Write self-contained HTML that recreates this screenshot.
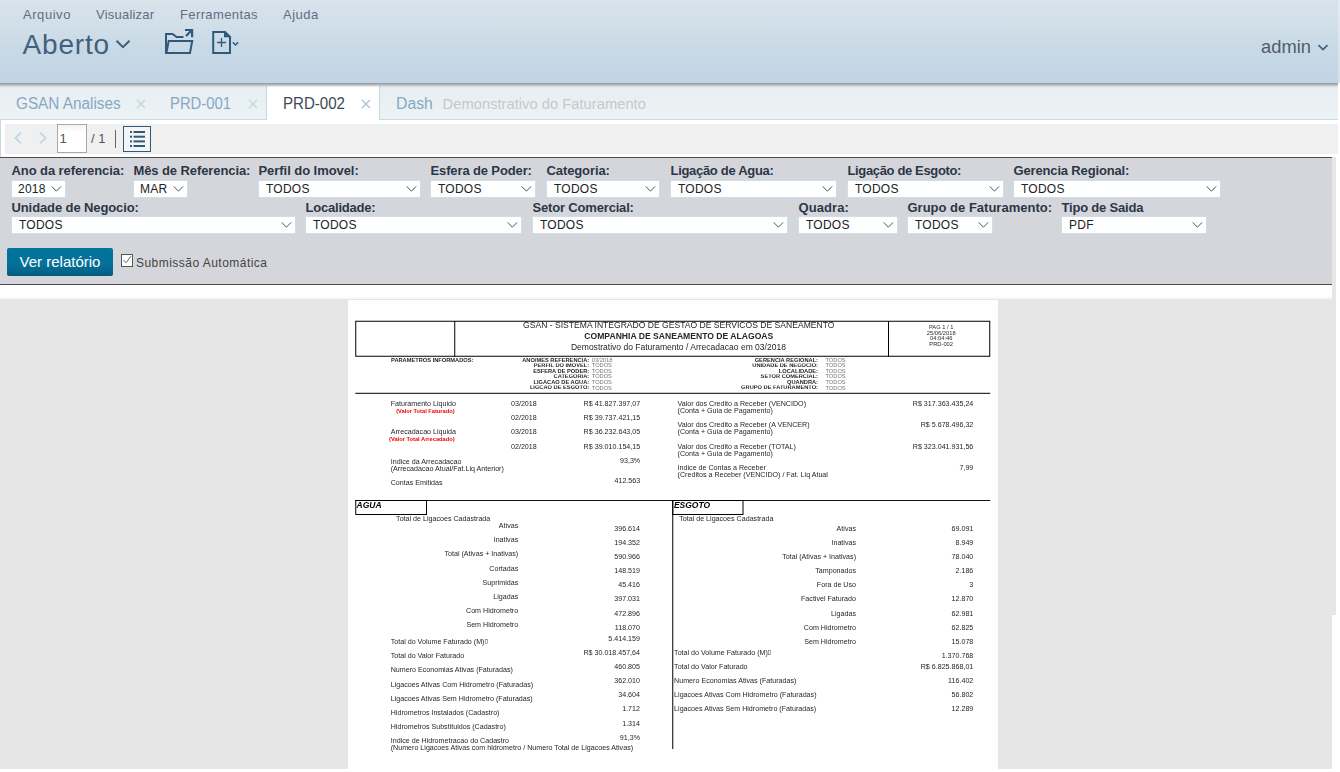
<!DOCTYPE html>
<html lang="pt-BR">
<head>
<meta charset="utf-8">
<title>PRD-002</title>
<style>
*{box-sizing:border-box;margin:0;padding:0}
html,body{width:1340px;height:772px;overflow:hidden;background:#fff}
body{font-family:"Liberation Sans",Arial,sans-serif;position:relative;color:#333}
.abs{position:absolute}
#hdr{left:0;top:0;width:1338px;height:83px;background:linear-gradient(#d8e3ec 0%,#d1dfe9 30%,#c9dae6 55%,#c4d6e5 80%,#c3d5e5 100%)}
#hdrR{left:1338px;top:0;width:2px;height:83px;background:linear-gradient(#e3ebf2,#d3e0ec)}
.menu{top:7px;font-size:13px;line-height:16px;color:#5f6f80;letter-spacing:.27px;white-space:nowrap}
#aberto{left:22.6px;top:27.5px;font-size:28px;line-height:34px;color:#42607d;letter-spacing:.8px;white-space:nowrap}
#admin{left:1261px;top:36px;font-size:19px;line-height:22px;color:#525c68;white-space:nowrap;transform:scaleX(.965);transform-origin:0 0}
#tabs{left:0;top:83px;width:1338px;height:37px;background:linear-gradient(#e6eef1,#edf3f5);border-bottom:1px solid #c6dae7}
#tabshadow{left:0;top:83px;width:1338px;height:5px;background:linear-gradient(rgba(100,105,110,.66) 0%,rgba(100,105,110,.52) 20%,rgba(100,105,110,.36) 40%,rgba(100,105,110,.18) 60%,rgba(100,105,110,.06) 80%,rgba(100,105,110,0) 100%)}
.tab{top:94.2px;font-size:16px;line-height:20px;color:#86a8c6;white-space:nowrap;transform-origin:0 0}
.tx{top:93px;font-size:19px;line-height:20px;color:#c3d3df;font-weight:400}
#act{left:266px;top:86px;width:114px;height:34px;background:#fff;border-left:1px solid #c3d8e8;border-right:1px solid #c3d8e8}
#tool{left:5px;top:124px;width:1333px;height:30px;background:#f0f0f0}
#pg{left:57px;top:124px;width:30px;height:29px;border:1px solid #a9a9a9;background:linear-gradient(#f3f3f3 0,#fff 8px);font-size:13px;line-height:27px;padding-left:1.5px;color:#555}
#pgof{left:91px;top:130px;font-size:13px;line-height:18px;color:#555;white-space:nowrap}
#sep{left:115px;top:130px;width:1px;height:18px;background:#666}
#lst{left:123px;top:126px;width:28px;height:26px;border:1.5px solid #2e5a7c;background:#f4f4f4}
#pline{left:0;top:157px;width:1332px;height:1px;background:#4d4d4f}
#panel{left:0;top:158px;width:1332px;height:126px;background:#d5d6db}
#pline2{left:0;top:284px;width:1332px;height:1px;background:#4d4d4f}
#rstrip{left:1332px;top:157px;width:4px;height:458px;background:#e6e6e6}
#lborder{left:0;top:119px;width:1px;height:38px;background:#c5d9e8}
#wfade{left:0;top:296px;width:1332px;height:3px;background:linear-gradient(#fff,#f5f5f5)}
#pgtop{left:348px;top:299px;width:650px;height:1px;background:#e6e6e6}
#grey{left:0;top:299px;width:1332px;height:470px;background:#e6e6e6}
.lb{font-size:13px;font-weight:700;line-height:16px;color:#2c3646;white-space:nowrap}
.sel{height:18px;background:#fff;border:1px solid #cbdeeb;font-size:12px;line-height:14px;color:#222;padding:1px 0 0 7px;white-space:nowrap;letter-spacing:.25px}
.sel svg{position:absolute;right:3px;top:4px}
#btn{left:7px;top:248px;width:106px;height:28px;background:linear-gradient(#03749c 0%,#03719a 55%,#05678c 80%,#06597b 100%);border-radius:2px;color:#fff;font-size:15px;line-height:28px;text-align:center;white-space:nowrap}
#cb{left:121px;top:254px;width:12px;height:12.5px;border:1px solid #555;background:#fff}
#cbl{left:136px;top:256px;font-size:12px;line-height:15px;color:#444;letter-spacing:.47px;white-space:nowrap}
#page{left:348px;top:299px;width:650px;height:470px;background:#fff;overflow:hidden;color:#262626}
#page .t{position:absolute;white-space:nowrap}
#page .ln{position:absolute}
#page .bx{position:absolute;border:1px solid #000}
#page .clip{position:absolute;overflow:hidden}
.tofu{display:inline-block;width:.36em;height:.65em;border:.08em solid #555;margin-left:.06em}
</style>
</head>
<body>
<div id="hdr" class="abs"></div><div id="hdrR" class="abs"></div>
<div class="abs menu" style="left:23px;letter-spacing:.55px">Arquivo</div>
<div class="abs menu" style="left:96px;letter-spacing:.22px">Visualizar</div>
<div class="abs menu" style="left:180px;letter-spacing:.38px">Ferramentas</div>
<div class="abs menu" style="left:283px;letter-spacing:.5px">Ajuda</div>
<div id="aberto" class="abs">Aberto</div>
<svg class="abs" style="left:115px;top:38px" width="16" height="12" viewBox="0 0 16 12"><path d="M1.5 2.7 L8 9.2 L14.5 2.7" fill="none" stroke="#3b607f" stroke-width="2"/></svg>
<!-- folder icon -->
<svg class="abs" style="left:160px;top:26px" width="38" height="32" viewBox="0 0 38 32"><g fill="none" stroke="#2f5a7b" stroke-width="2" stroke-linejoin="miter"><path d="M6 28 V8 H12.6 L16.6 11 H23.5"/><path d="M8.7 15 L6.4 27 H30 L32.2 15 Z"/><path d="M26 10 L32 4" stroke-width="2.3"/><path d="M25 4 H32.1 V11.3" stroke-width="2.2"/></g></svg>
<!-- doc icon -->
<svg class="abs" style="left:208px;top:28px" width="34" height="30" viewBox="0 0 34 30"><g fill="none" stroke="#2f5a7b"><path d="M5.2 4 H17 L22 9 V25 H5.2 Z" stroke-width="2"/><path d="M16.8 4.5 V8.4 H21.5 Z" stroke-width="1.6" fill="#2f5a7b"/><path d="M13.5 10 V19 M9 14.5 H18" stroke-width="1.3"/><path d="M24.8 14.3 L27.5 17 L30.2 14.3" stroke-width="1.5"/></g></svg>
<div id="admin" class="abs">admin</div>
<svg class="abs" style="left:1316px;top:42px" width="14" height="10" viewBox="0 0 14 10"><path d="M2.5 3.1 L7 7.6 L11.5 3.1" fill="none" stroke="#3b607f" stroke-width="1.6"/></svg>

<div id="tabs" class="abs"></div>
<div id="act" class="abs"></div>
<div id="tabshadow" class="abs"></div>
<div class="abs tab" style="left:15.7px;transform:scaleX(.957)">GSAN Analises</div><svg class="abs" style="left:136px;top:99px" width="10" height="10" viewBox="0 0 10 10"><path d="M1 1 L9 9 M9 1 L1 9" fill="none" stroke="#c0d2df" stroke-width="1.2"/></svg>
<div class="abs tab" style="left:169.9px;transform:scaleX(.927)">PRD-001</div><svg class="abs" style="left:248px;top:99px" width="10" height="10" viewBox="0 0 10 10"><path d="M1 1 L9 9 M9 1 L1 9" fill="none" stroke="#c0d2df" stroke-width="1.2"/></svg>
<div class="abs tab" style="left:283.2px;transform:scaleX(.942);color:#3d4856">PRD-002</div><svg class="abs" style="left:361px;top:99px" width="10" height="10" viewBox="0 0 10 10"><path d="M1 1 L9 9 M9 1 L1 9" fill="none" stroke="#aac0d2" stroke-width="1.2"/></svg>
<div class="abs tab" style="left:395.7px;transform:scaleX(.985)">Dash</div>
<div class="abs tab" style="left:442.6px;top:94.2px;font-size:14.75px;color:#c7c8cc">Demonstrativo do Faturamento</div>

<div id="tool" class="abs"></div>
<svg class="abs" style="left:12px;top:130px" width="38" height="16" viewBox="0 0 38 16"><path d="M9 2.5 L3.5 8 L9 13.5 M28 2.5 L33.5 8 L28 13.5" fill="none" stroke="#bdd3e6" stroke-width="1.6"/></svg>
<div id="pg" class="abs">1</div>
<div id="pgof" class="abs">/ 1</div>
<div id="sep" class="abs"></div>
<div id="lst" class="abs"></div>
<svg class="abs" style="left:123px;top:126px" width="28" height="26" viewBox="0 0 28 26"><g fill="#2e5a7c"><rect x="7" y="5" width="2" height="2"/><rect x="10.5" y="5" width="11.5" height="2"/><rect x="7" y="9.7" width="2" height="2"/><rect x="10.5" y="9.7" width="11.5" height="2"/><rect x="7" y="14.4" width="2" height="2"/><rect x="10.5" y="14.4" width="11.5" height="2"/><rect x="7" y="19" width="2" height="2"/><rect x="10.5" y="19" width="11.5" height="2"/></g></svg>

<div id="wfade" class="abs"></div><div id="grey" class="abs"></div>
<div id="rstrip" class="abs"></div><div id="lborder" class="abs"></div>
<div id="pline" class="abs"></div>
<div id="panel" class="abs"></div>
<div id="pline2" class="abs"></div>
<div class="abs lb" style="left:11.5px;top:162.8px;letter-spacing:-0.081px">Ano da referencia:</div>
<div class="abs sel" style="left:11px;top:180px;width:55px;padding-left:6px">2018<svg width="12" height="8" viewBox="0 0 12 8"><path d="M1.7 1.4 L6.4 6.2 L11.1 1.4" fill="none" stroke="#4a4a4a" stroke-width=".95"/></svg></div>
<div class="abs lb" style="left:133.5px;top:162.8px;letter-spacing:-0.094px">Mês de Referencia:</div>
<div class="abs sel" style="left:133px;top:180px;width:55px;padding-left:6px">MAR<svg width="12" height="8" viewBox="0 0 12 8"><path d="M1.7 1.4 L6.4 6.2 L11.1 1.4" fill="none" stroke="#4a4a4a" stroke-width=".95"/></svg></div>
<div class="abs lb" style="left:258.5px;top:162.8px;letter-spacing:-0.055px">Perfil do Imovel:</div>
<div class="abs sel" style="left:258px;top:180px;width:163px">TODOS<svg width="12" height="8" viewBox="0 0 12 8"><path d="M1.7 1.4 L6.4 6.2 L11.1 1.4" fill="none" stroke="#4a4a4a" stroke-width=".95"/></svg></div>
<div class="abs lb" style="left:430.5px;top:162.8px;letter-spacing:-0.127px">Esfera de Poder:</div>
<div class="abs sel" style="left:430px;top:180px;width:106px">TODOS<svg width="12" height="8" viewBox="0 0 12 8"><path d="M1.7 1.4 L6.4 6.2 L11.1 1.4" fill="none" stroke="#4a4a4a" stroke-width=".95"/></svg></div>
<div class="abs lb" style="left:546.5px;top:162.8px;letter-spacing:-0.100px">Categoria:</div>
<div class="abs sel" style="left:546px;top:180px;width:114px">TODOS<svg width="12" height="8" viewBox="0 0 12 8"><path d="M1.7 1.4 L6.4 6.2 L11.1 1.4" fill="none" stroke="#4a4a4a" stroke-width=".95"/></svg></div>
<div class="abs lb" style="left:670.5px;top:162.8px;letter-spacing:-0.305px">Ligação de Agua:</div>
<div class="abs sel" style="left:670px;top:180px;width:167px">TODOS<svg width="12" height="8" viewBox="0 0 12 8"><path d="M1.7 1.4 L6.4 6.2 L11.1 1.4" fill="none" stroke="#4a4a4a" stroke-width=".95"/></svg></div>
<div class="abs lb" style="left:847.5px;top:162.8px;letter-spacing:-0.356px">Ligação de Esgoto:</div>
<div class="abs sel" style="left:847px;top:180px;width:157px">TODOS<svg width="12" height="8" viewBox="0 0 12 8"><path d="M1.7 1.4 L6.4 6.2 L11.1 1.4" fill="none" stroke="#4a4a4a" stroke-width=".95"/></svg></div>
<div class="abs lb" style="left:1013.5px;top:162.8px;letter-spacing:-0.154px">Gerencia Regional:</div>
<div class="abs sel" style="left:1013px;top:180px;width:208px">TODOS<svg width="12" height="8" viewBox="0 0 12 8"><path d="M1.7 1.4 L6.4 6.2 L11.1 1.4" fill="none" stroke="#4a4a4a" stroke-width=".95"/></svg></div>
<div class="abs lb" style="left:11.5px;top:199.8px;letter-spacing:-0.105px">Unidade de Negocio:</div>
<div class="abs sel" style="left:11px;top:216px;width:285px">TODOS<svg width="12" height="8" viewBox="0 0 12 8"><path d="M1.7 1.4 L6.4 6.2 L11.1 1.4" fill="none" stroke="#4a4a4a" stroke-width=".95"/></svg></div>
<div class="abs lb" style="left:305.5px;top:199.8px;letter-spacing:-0.205px">Localidade:</div>
<div class="abs sel" style="left:305px;top:216px;width:217px">TODOS<svg width="12" height="8" viewBox="0 0 12 8"><path d="M1.7 1.4 L6.4 6.2 L11.1 1.4" fill="none" stroke="#4a4a4a" stroke-width=".95"/></svg></div>
<div class="abs lb" style="left:532.5px;top:199.8px;letter-spacing:-0.172px">Setor Comercial:</div>
<div class="abs sel" style="left:532px;top:216px;width:256px">TODOS<svg width="12" height="8" viewBox="0 0 12 8"><path d="M1.7 1.4 L6.4 6.2 L11.1 1.4" fill="none" stroke="#4a4a4a" stroke-width=".95"/></svg></div>
<div class="abs lb" style="left:798.5px;top:199.8px;letter-spacing:0.094px">Quadra:</div>
<div class="abs sel" style="left:798px;top:216px;width:100px">TODOS<svg width="12" height="8" viewBox="0 0 12 8"><path d="M1.7 1.4 L6.4 6.2 L11.1 1.4" fill="none" stroke="#4a4a4a" stroke-width=".95"/></svg></div>
<div class="abs lb" style="left:907.5px;top:199.8px;letter-spacing:0.002px">Grupo de Faturamento:</div>
<div class="abs sel" style="left:907px;top:216px;width:86px">TODOS<svg width="12" height="8" viewBox="0 0 12 8"><path d="M1.7 1.4 L6.4 6.2 L11.1 1.4" fill="none" stroke="#4a4a4a" stroke-width=".95"/></svg></div>
<div class="abs lb" style="left:1061.5px;top:199.8px;letter-spacing:-0.191px">Tipo de Saida</div>
<div class="abs sel" style="left:1061px;top:216px;width:146px">PDF<svg width="12" height="8" viewBox="0 0 12 8"><path d="M1.7 1.4 L6.4 6.2 L11.1 1.4" fill="none" stroke="#4a4a4a" stroke-width=".95"/></svg></div>
<div id="btn" class="abs">Ver relatório</div>
<div id="cb" class="abs"><svg width="10" height="10" viewBox="0 0 10 10" style="position:absolute;left:0;top:0"><path d="M1.5 5 L4 7.8 L9 1.2" fill="none" stroke="#555" stroke-width=".9"/></svg></div>
<div id="cbl" class="abs">Submissão Automática</div>
<div id="page" class="abs">
<div style="position:absolute;left:0;top:0;width:2600px;height:1880px;transform:scale(0.25);transform-origin:0 0"><div class="bx" style="left:29.20px;top:87.20px;width:2540.00px;height:144.00px;border-width:4.80px;overflow:hidden"></div>
<div class="clip" style="left:430.00px;top:91.60px;width:1728.00px;height:136.00px">
<div class="t" style="left:270.40px;top:-4.60px;font-size:34.28px;line-height:34.28px;">GSAN - SISTEMA INTEGRADO DE GESTAO DE SERVICOS DE SANEAMENTO</div>
<div class="t" style="left:515.20px;top:38.92px;font-size:34.36px;line-height:34.36px;font-weight:700;">COMPANHIA DE SANEAMENTO DE ALAGOAS</div>
<div class="t" style="left:461.60px;top:82.36px;font-size:34.08px;line-height:34.08px;">Demostrativo do Faturamento / Arrecadacao em 03/2018</div>
</div>
<div class="ln" style="left:425.20px;top:88.00px;width:4.00px;height:142.00px;background:#000"></div>
<div class="ln" style="left:2160.00px;top:88.00px;width:4.00px;height:142.00px;background:#000"></div>
<div class="t" style="top:100.92px;font-size:23.00px;line-height:23.00px;left:1972.80px;width:800.00px;text-align:center;color:#2a2a2a;">PAG 1 / 1</div>
<div class="t" style="top:123.32px;font-size:23.00px;line-height:23.00px;left:1972.80px;width:800.00px;text-align:center;color:#2a2a2a;">25/06/2018</div>
<div class="t" style="top:145.72px;font-size:23.00px;line-height:23.00px;left:1972.80px;width:800.00px;text-align:center;color:#2a2a2a;">04:04:46</div>
<div class="t" style="top:168.12px;font-size:23.00px;line-height:23.00px;left:1972.80px;width:800.00px;text-align:center;color:#2a2a2a;">PRD-002</div>
<div class="clip" style="left:21.60px;top:235.40px;width:480.00px;height:22.40px"><div class="t" style="right:0;top:-4.28px;font-size:22.76px;line-height:22.76px;font-weight:700">PARAMETROS INFORMADOS:</div></div>
<div class="clip" style="left:484.80px;top:235.40px;width:480.00px;height:22.40px"><div class="t" style="right:0;top:-4.28px;font-size:22.76px;line-height:22.76px;font-weight:700">ANO/MES REFERENCIA:</div></div>
<div class="t" style="top:231.72px;font-size:22.76px;line-height:22.76px;left:975.20px;color:#777;">03/2018</div>
<div class="clip" style="left:484.80px;top:257.60px;width:480.00px;height:22.40px"><div class="t" style="right:0;top:-4.28px;font-size:22.76px;line-height:22.76px;font-weight:700">PERFIL DO IMOVEL:</div></div>
<div class="t" style="top:253.92px;font-size:22.76px;line-height:22.76px;left:975.20px;color:#777;">TODOS</div>
<div class="clip" style="left:484.80px;top:279.80px;width:480.00px;height:22.40px"><div class="t" style="right:0;top:-4.28px;font-size:22.76px;line-height:22.76px;font-weight:700">ESFERA DE PODER:</div></div>
<div class="t" style="top:276.12px;font-size:22.76px;line-height:22.76px;left:975.20px;color:#777;">TODOS</div>
<div class="clip" style="left:484.80px;top:302.00px;width:480.00px;height:22.40px"><div class="t" style="right:0;top:-4.28px;font-size:22.76px;line-height:22.76px;font-weight:700">CATEGORIA:</div></div>
<div class="t" style="top:298.32px;font-size:22.76px;line-height:22.76px;left:975.20px;color:#777;">TODOS</div>
<div class="clip" style="left:484.80px;top:324.20px;width:480.00px;height:22.40px"><div class="t" style="right:0;top:-4.28px;font-size:22.76px;line-height:22.76px;font-weight:700">LIGACAO DE AGUA:</div></div>
<div class="t" style="top:320.52px;font-size:22.76px;line-height:22.76px;left:975.20px;color:#777;">TODOS</div>
<div class="clip" style="left:484.80px;top:346.40px;width:480.00px;height:22.40px"><div class="t" style="right:0;top:-4.28px;font-size:22.76px;line-height:22.76px;font-weight:700">LIGCAO DE ESGOTO:</div></div>
<div class="t" style="top:342.72px;font-size:22.76px;line-height:22.76px;left:975.20px;color:#777;">TODOS</div>
<div class="clip" style="left:1400.00px;top:235.40px;width:480.00px;height:22.40px"><div class="t" style="right:0;top:-4.28px;font-size:22.76px;line-height:22.76px;font-weight:700">GERENCIA REGIONAL:</div></div>
<div class="t" style="top:231.72px;font-size:22.76px;line-height:22.76px;left:1910.00px;color:#777;">TODOS</div>
<div class="clip" style="left:1400.00px;top:257.60px;width:480.00px;height:22.40px"><div class="t" style="right:0;top:-4.28px;font-size:22.76px;line-height:22.76px;font-weight:700">UNIDADE DE NEGOCIO:</div></div>
<div class="t" style="top:253.92px;font-size:22.76px;line-height:22.76px;left:1910.00px;color:#777;">TODOS</div>
<div class="clip" style="left:1400.00px;top:279.80px;width:480.00px;height:22.40px"><div class="t" style="right:0;top:-4.28px;font-size:22.76px;line-height:22.76px;font-weight:700">LOCALIDADE:</div></div>
<div class="t" style="top:276.12px;font-size:22.76px;line-height:22.76px;left:1910.00px;color:#777;">TODOS</div>
<div class="clip" style="left:1400.00px;top:302.00px;width:480.00px;height:22.40px"><div class="t" style="right:0;top:-4.28px;font-size:22.76px;line-height:22.76px;font-weight:700">SETOR COMERCIAL:</div></div>
<div class="t" style="top:298.32px;font-size:22.76px;line-height:22.76px;left:1910.00px;color:#777;">TODOS</div>
<div class="clip" style="left:1400.00px;top:324.20px;width:480.00px;height:22.40px"><div class="t" style="right:0;top:-4.28px;font-size:22.76px;line-height:22.76px;font-weight:700">QUANDRA:</div></div>
<div class="t" style="top:320.52px;font-size:22.76px;line-height:22.76px;left:1910.00px;color:#777;">TODOS</div>
<div class="clip" style="left:1400.00px;top:346.40px;width:480.00px;height:22.40px"><div class="t" style="right:0;top:-4.28px;font-size:22.76px;line-height:22.76px;font-weight:700">GRUPO DE FATURAMENTO:</div></div>
<div class="t" style="top:342.72px;font-size:22.76px;line-height:22.76px;left:1910.00px;color:#777;">TODOS</div>
<div class="ln" style="left:29.20px;top:375.20px;width:2540.00px;height:4.80px;background:#333"></div>
<div class="t" style="top:403.08px;font-size:28.48px;line-height:28.48px;left:170.80px;">Faturamento Liquido</div>
<div class="t" style="top:435.88px;font-size:22.80px;line-height:22.80px;right:2173.60px;font-weight:700;color:#f00000;">(Valor Total Faturado)</div>
<div class="t" style="top:517.08px;font-size:28.48px;line-height:28.48px;left:170.80px;">Arrecadacao Liquida</div>
<div class="t" style="top:548.68px;font-size:22.80px;line-height:22.80px;right:2173.60px;font-weight:700;color:#f00000;">(Valor Total Arrecadado)</div>
<div class="t" style="top:403.08px;font-size:28.48px;line-height:28.48px;left:652.00px;">03/2018</div>
<div class="t" style="top:403.08px;font-size:28.48px;line-height:28.48px;right:1431.20px;">R$ 41.827.397,07</div>
<div class="t" style="top:460.68px;font-size:28.48px;line-height:28.48px;left:652.00px;">02/2018</div>
<div class="t" style="top:460.68px;font-size:28.48px;line-height:28.48px;right:1431.20px;">R$ 39.737.421,15</div>
<div class="t" style="top:517.08px;font-size:28.48px;line-height:28.48px;left:652.00px;">03/2018</div>
<div class="t" style="top:517.08px;font-size:28.48px;line-height:28.48px;right:1431.20px;">R$ 36.232.643,05</div>
<div class="t" style="top:574.68px;font-size:28.48px;line-height:28.48px;left:652.00px;">02/2018</div>
<div class="t" style="top:574.68px;font-size:28.48px;line-height:28.48px;right:1431.20px;">R$ 39.010.154,15</div>
<div class="t" style="top:635.48px;font-size:28.48px;line-height:28.48px;left:170.80px;">Indice da Arrecadacao</div>
<div class="t" style="top:663.88px;font-size:28.48px;line-height:28.48px;left:170.80px;">(Arrecadacao Atual/Fat.Liq Anterior)</div>
<div class="t" style="top:630.28px;font-size:28.48px;line-height:28.48px;right:1431.20px;">93,3%</div>
<div class="t" style="top:720.28px;font-size:28.48px;line-height:28.48px;left:170.80px;">Contas Emitidas</div>
<div class="t" style="top:711.88px;font-size:28.48px;line-height:28.48px;right:1431.20px;">412.563</div>
<div class="t" style="top:403.08px;font-size:28.48px;line-height:28.48px;left:1318.40px;">Valor dos Credito a Receber (VENCIDO)</div>
<div class="t" style="top:431.08px;font-size:28.48px;line-height:28.48px;left:1318.40px;">(Conta + Guia de Pagamento)</div>
<div class="t" style="top:403.08px;font-size:28.48px;line-height:28.48px;right:98.80px;">R$ 317.363.435,24</div>
<div class="t" style="top:488.68px;font-size:28.48px;line-height:28.48px;left:1318.40px;">Valor dos Credito a Receber (A VENCER)</div>
<div class="t" style="top:516.68px;font-size:28.48px;line-height:28.48px;left:1318.40px;">(Conta + Guia de Pagamento)</div>
<div class="t" style="top:488.68px;font-size:28.48px;line-height:28.48px;right:98.80px;">R$ 5.678.496,32</div>
<div class="t" style="top:574.68px;font-size:28.48px;line-height:28.48px;left:1318.40px;">Valor dos Credito a Receber (TOTAL)</div>
<div class="t" style="top:602.68px;font-size:28.48px;line-height:28.48px;left:1318.40px;">(Conta + Guia de Pagamento)</div>
<div class="t" style="top:574.68px;font-size:28.48px;line-height:28.48px;right:98.80px;">R$ 323.041.931,56</div>
<div class="t" style="top:659.88px;font-size:28.48px;line-height:28.48px;left:1318.40px;">Indice de Contas a Receber</div>
<div class="t" style="top:687.48px;font-size:28.48px;line-height:28.48px;left:1318.40px;">(Creditos a Receber (VENCIDO) / Fat. Liq Atual</div>
<div class="t" style="top:659.88px;font-size:28.48px;line-height:28.48px;right:98.80px;">7,99</div>
<div class="ln" style="left:29.20px;top:804.00px;width:2540.00px;height:4.40px;background:#111"></div>
<div class="bx" style="left:29.20px;top:804.00px;width:286.80px;height:60.40px;border-width:4.40px;overflow:hidden"><div class="t" style="left:0.80px;top:-1.60px;font-size:34.00px;line-height:34.00px;font-weight:700;font-style:italic;color:#000">AGUA</div></div>
<div class="bx" style="left:1296.80px;top:804.00px;width:285.60px;height:60.40px;border-width:4.40px;overflow:hidden"><div class="t" style="left:2.80px;top:-1.60px;font-size:34.00px;line-height:34.00px;font-weight:700;font-style:italic;color:#000">ESGOTO</div></div>
<div class="ln" style="left:1297.20px;top:804.00px;width:4.00px;height:996.00px;background:#000"></div>
<div class="t" style="top:864.68px;font-size:28.48px;line-height:28.48px;left:192.40px;">Total de Ligacoes Cadastrada</div>
<div class="t" style="top:891.88px;font-size:28.48px;line-height:28.48px;right:1919.20px;">Ativas</div>
<div class="t" style="top:902.28px;font-size:28.48px;line-height:28.48px;right:1432.00px;">396.614</div>
<div class="t" style="top:948.52px;font-size:28.48px;line-height:28.48px;right:1919.20px;">Inativas</div>
<div class="t" style="top:958.92px;font-size:28.48px;line-height:28.48px;right:1432.00px;">194.352</div>
<div class="t" style="top:1005.16px;font-size:28.48px;line-height:28.48px;right:1919.20px;">Total (Ativas + Inativas)</div>
<div class="t" style="top:1015.56px;font-size:28.48px;line-height:28.48px;right:1432.00px;">590.966</div>
<div class="t" style="top:1061.80px;font-size:28.48px;line-height:28.48px;right:1919.20px;">Cortadas</div>
<div class="t" style="top:1072.20px;font-size:28.48px;line-height:28.48px;right:1432.00px;">148.519</div>
<div class="t" style="top:1118.44px;font-size:28.48px;line-height:28.48px;right:1919.20px;">Suprimidas</div>
<div class="t" style="top:1128.84px;font-size:28.48px;line-height:28.48px;right:1432.00px;">45.416</div>
<div class="t" style="top:1175.08px;font-size:28.48px;line-height:28.48px;right:1919.20px;">Ligadas</div>
<div class="t" style="top:1185.48px;font-size:28.48px;line-height:28.48px;right:1432.00px;">397.031</div>
<div class="t" style="top:1231.72px;font-size:28.48px;line-height:28.48px;right:1919.20px;">Com Hidrometro</div>
<div class="t" style="top:1242.12px;font-size:28.48px;line-height:28.48px;right:1432.00px;">472.896</div>
<div class="t" style="top:1288.36px;font-size:28.48px;line-height:28.48px;right:1919.20px;">Sem Hidrometro</div>
<div class="t" style="top:1298.76px;font-size:28.48px;line-height:28.48px;right:1432.00px;">118.070</div>
<div class="t" style="top:1355.08px;font-size:28.48px;line-height:28.48px;left:170.80px;">Total do Volume Faturado (M)<span class="tofu"></span></div>
<div class="t" style="top:1343.08px;font-size:28.48px;line-height:28.48px;right:1432.00px;">5.414.159</div>
<div class="t" style="top:1412.28px;font-size:28.48px;line-height:28.48px;left:170.80px;">Total do Valor Faturado</div>
<div class="t" style="top:1399.48px;font-size:28.48px;line-height:28.48px;right:1432.00px;">R$ 30.018.457,64</div>
<div class="t" style="top:1469.08px;font-size:28.48px;line-height:28.48px;left:170.80px;">Numero Economias Ativas (Faturadas)</div>
<div class="t" style="top:1455.88px;font-size:28.48px;line-height:28.48px;right:1432.00px;">460.805</div>
<div class="t" style="top:1525.88px;font-size:28.48px;line-height:28.48px;left:170.80px;">Ligacoes Ativas Com Hidrometro (Faturadas)</div>
<div class="t" style="top:1512.28px;font-size:28.48px;line-height:28.48px;right:1432.00px;">362.010</div>
<div class="t" style="top:1582.68px;font-size:28.48px;line-height:28.48px;left:170.80px;">Ligacoes Ativas Sem Hidrometro (Faturadas)</div>
<div class="t" style="top:1569.08px;font-size:28.48px;line-height:28.48px;right:1432.00px;">34.604</div>
<div class="t" style="top:1639.08px;font-size:28.48px;line-height:28.48px;left:170.80px;">Hidrometros Instalados (Cadastro)</div>
<div class="t" style="top:1625.48px;font-size:28.48px;line-height:28.48px;right:1432.00px;">1.712</div>
<div class="t" style="top:1695.88px;font-size:28.48px;line-height:28.48px;left:170.80px;">Hidrometros Substituidos (Cadastro)</div>
<div class="t" style="top:1682.28px;font-size:28.48px;line-height:28.48px;right:1432.00px;">1.314</div>
<div class="t" style="top:1752.28px;font-size:28.48px;line-height:28.48px;left:170.80px;">Indice de Hidrometracao do Cadastro</div>
<div class="t" style="top:1739.08px;font-size:28.48px;line-height:28.48px;right:1432.00px;">91,3%</div>
<div class="t" style="top:1780.68px;font-size:28.48px;line-height:28.48px;left:170.80px;">(Numero Ligacoes Ativas com hidrometro / Numero Total de Ligacoes Ativas)</div>
<div class="t" style="top:864.68px;font-size:28.48px;line-height:28.48px;left:1324.80px;">Total de Ligacoes Cadastrada</div>
<div class="t" style="top:902.28px;font-size:28.48px;line-height:28.48px;right:568.00px;">Ativas</div>
<div class="t" style="top:902.28px;font-size:28.48px;line-height:28.48px;right:98.80px;">69.091</div>
<div class="t" style="top:958.92px;font-size:28.48px;line-height:28.48px;right:568.00px;">Inativas</div>
<div class="t" style="top:958.92px;font-size:28.48px;line-height:28.48px;right:98.80px;">8.949</div>
<div class="t" style="top:1015.56px;font-size:28.48px;line-height:28.48px;right:568.00px;">Total (Ativas + Inativas)</div>
<div class="t" style="top:1015.56px;font-size:28.48px;line-height:28.48px;right:98.80px;">78.040</div>
<div class="t" style="top:1072.20px;font-size:28.48px;line-height:28.48px;right:568.00px;">Tamponados</div>
<div class="t" style="top:1072.20px;font-size:28.48px;line-height:28.48px;right:98.80px;">2.186</div>
<div class="t" style="top:1128.84px;font-size:28.48px;line-height:28.48px;right:568.00px;">Fora de Uso</div>
<div class="t" style="top:1128.84px;font-size:28.48px;line-height:28.48px;right:98.80px;">3</div>
<div class="t" style="top:1185.48px;font-size:28.48px;line-height:28.48px;right:568.00px;">Factivel Faturado</div>
<div class="t" style="top:1185.48px;font-size:28.48px;line-height:28.48px;right:98.80px;">12.870</div>
<div class="t" style="top:1242.12px;font-size:28.48px;line-height:28.48px;right:568.00px;">Ligadas</div>
<div class="t" style="top:1242.12px;font-size:28.48px;line-height:28.48px;right:98.80px;">62.981</div>
<div class="t" style="top:1298.76px;font-size:28.48px;line-height:28.48px;right:568.00px;">Com Hidrometro</div>
<div class="t" style="top:1298.76px;font-size:28.48px;line-height:28.48px;right:98.80px;">62.825</div>
<div class="t" style="top:1355.40px;font-size:28.48px;line-height:28.48px;right:568.00px;">Sem Hidrometro</div>
<div class="t" style="top:1355.40px;font-size:28.48px;line-height:28.48px;right:98.80px;">15.078</div>
<div class="t" style="top:1399.88px;font-size:28.48px;line-height:28.48px;left:1304.40px;">Total do Volume Faturado (M)<span class="tofu"></span></div>
<div class="t" style="top:1410.28px;font-size:28.48px;line-height:28.48px;right:98.80px;">1.370.768</div>
<div class="t" style="top:1455.88px;font-size:28.48px;line-height:28.48px;left:1304.40px;">Total do Valor Faturado</div>
<div class="t" style="top:1455.88px;font-size:28.48px;line-height:28.48px;right:98.80px;">R$ 6.825.868,01</div>
<div class="t" style="top:1512.68px;font-size:28.48px;line-height:28.48px;left:1304.40px;">Numero Economias Ativas (Faturadas)</div>
<div class="t" style="top:1512.68px;font-size:28.48px;line-height:28.48px;right:98.80px;">116.402</div>
<div class="t" style="top:1569.08px;font-size:28.48px;line-height:28.48px;left:1304.40px;">Ligacoes Ativas Com Hidrometro (Faturadas)</div>
<div class="t" style="top:1569.08px;font-size:28.48px;line-height:28.48px;right:98.80px;">56.802</div>
<div class="t" style="top:1625.48px;font-size:28.48px;line-height:28.48px;left:1304.40px;">Ligacoes Ativas Sem Hidrometro (Faturadas)</div>
<div class="t" style="top:1625.48px;font-size:28.48px;line-height:28.48px;right:98.80px;">12.289</div></div>
</div>
<div id="pgtop" class="abs"></div>
</body>
</html>
